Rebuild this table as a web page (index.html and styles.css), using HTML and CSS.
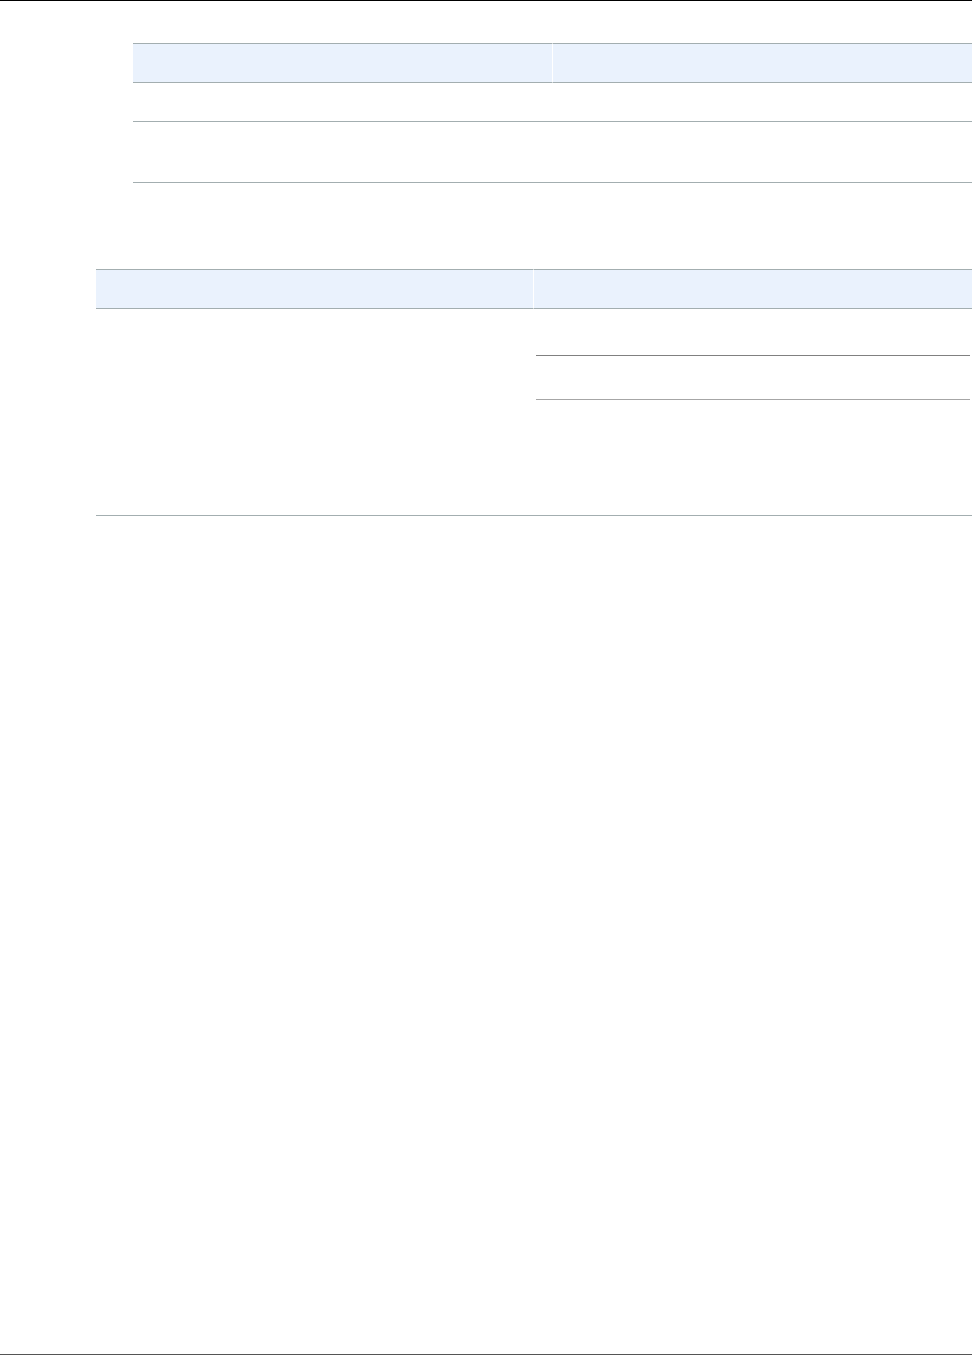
FILE: index.html
```html
<!DOCTYPE html>
<html lang="en">
<head>
    <meta charset="UTF-8">
    <meta name="viewport" content="width=device-width, initial-scale=1.0">
    <title>Tables</title>
    <link rel="stylesheet" href="styles.css">
</head>
<body>

    <div class="topline"></div>

    <div class="page">
        <div class="block block-first">
            <table class="doc-table">
                <thead>
                    <tr class="head-row">
                        <th></th>
                        <th></th>
                    </tr>
                </thead>
                <tbody>
                    <tr class="row-short">
                        <td></td>
                        <td></td>
                    </tr>
                    <tr class="row-tall">
                        <td></td>
                        <td></td>
                    </tr>
                </tbody>
            </table>
        </div>

        <div class="block block-second">
            <table class="doc-table">
                <thead>
                    <tr class="head-row">
                        <th></th>
                        <th></th>
                    </tr>
                </thead>
                <tbody>
                    <tr class="row-big">
                        <td></td>
                        <td class="nested-cell">
                            <table class="inner-table">
                                <tr class="inner-one"><td></td></tr>
                                <tr class="inner-two"><td></td></tr>
                            </table>
                        </td>
                    </tr>
                </tbody>
            </table>
        </div>
    </div>

    <div class="bottomline"></div>

</body>
</html>
```

FILE: styles.css
```css
html, body {
    margin: 0;
    padding: 0;
}
body {
    font-family: "Liberation Sans", Arial, sans-serif;
    font-size: 14px;
    color: #16191f;
    background: #fff;
    min-height: 1355px;
    display: flex;
    flex-direction: column;
}
.topline {
    height: 1px;
    background: #000;
}
.page {
    flex: 1;
}
.bottomline {
    height: 1px;
    background: #555;
}
.block-first {
    margin: 42px 0 0 133px;
}
.block-second {
    margin: 86px 0 0 96px;
}
.doc-table {
    width: 100%;
    border-collapse: separate;
    border-spacing: 0;
    table-layout: fixed;
}
.doc-table th,
.doc-table td {
    padding: 0;
    border-bottom: 1px solid #a3aeb0;
    vertical-align: top;
}
.doc-table th {
    background: #eaf2fd;
    border-top: 1px solid #a3aeb0;
}
.doc-table th:first-child {
    border-right: 1px solid #fff;
}
.head-row th {
    height: 38px;
}
.row-short td {
    height: 38px;
}
.row-tall td {
    height: 60px;
}
.row-big > td {
    height: 206px;
}
.nested-cell {
    padding: 0 2px 0 2px !important;
}
.inner-table {
    width: 100%;
    border-collapse: collapse;
}
.inner-table td {
    padding: 0;
}
.inner-one td {
    height: 46px;
    border-bottom: 1px solid #808080;
}
.inner-two td {
    height: 43px;
    border-bottom: 1px solid #a6a6a6;
}
```
